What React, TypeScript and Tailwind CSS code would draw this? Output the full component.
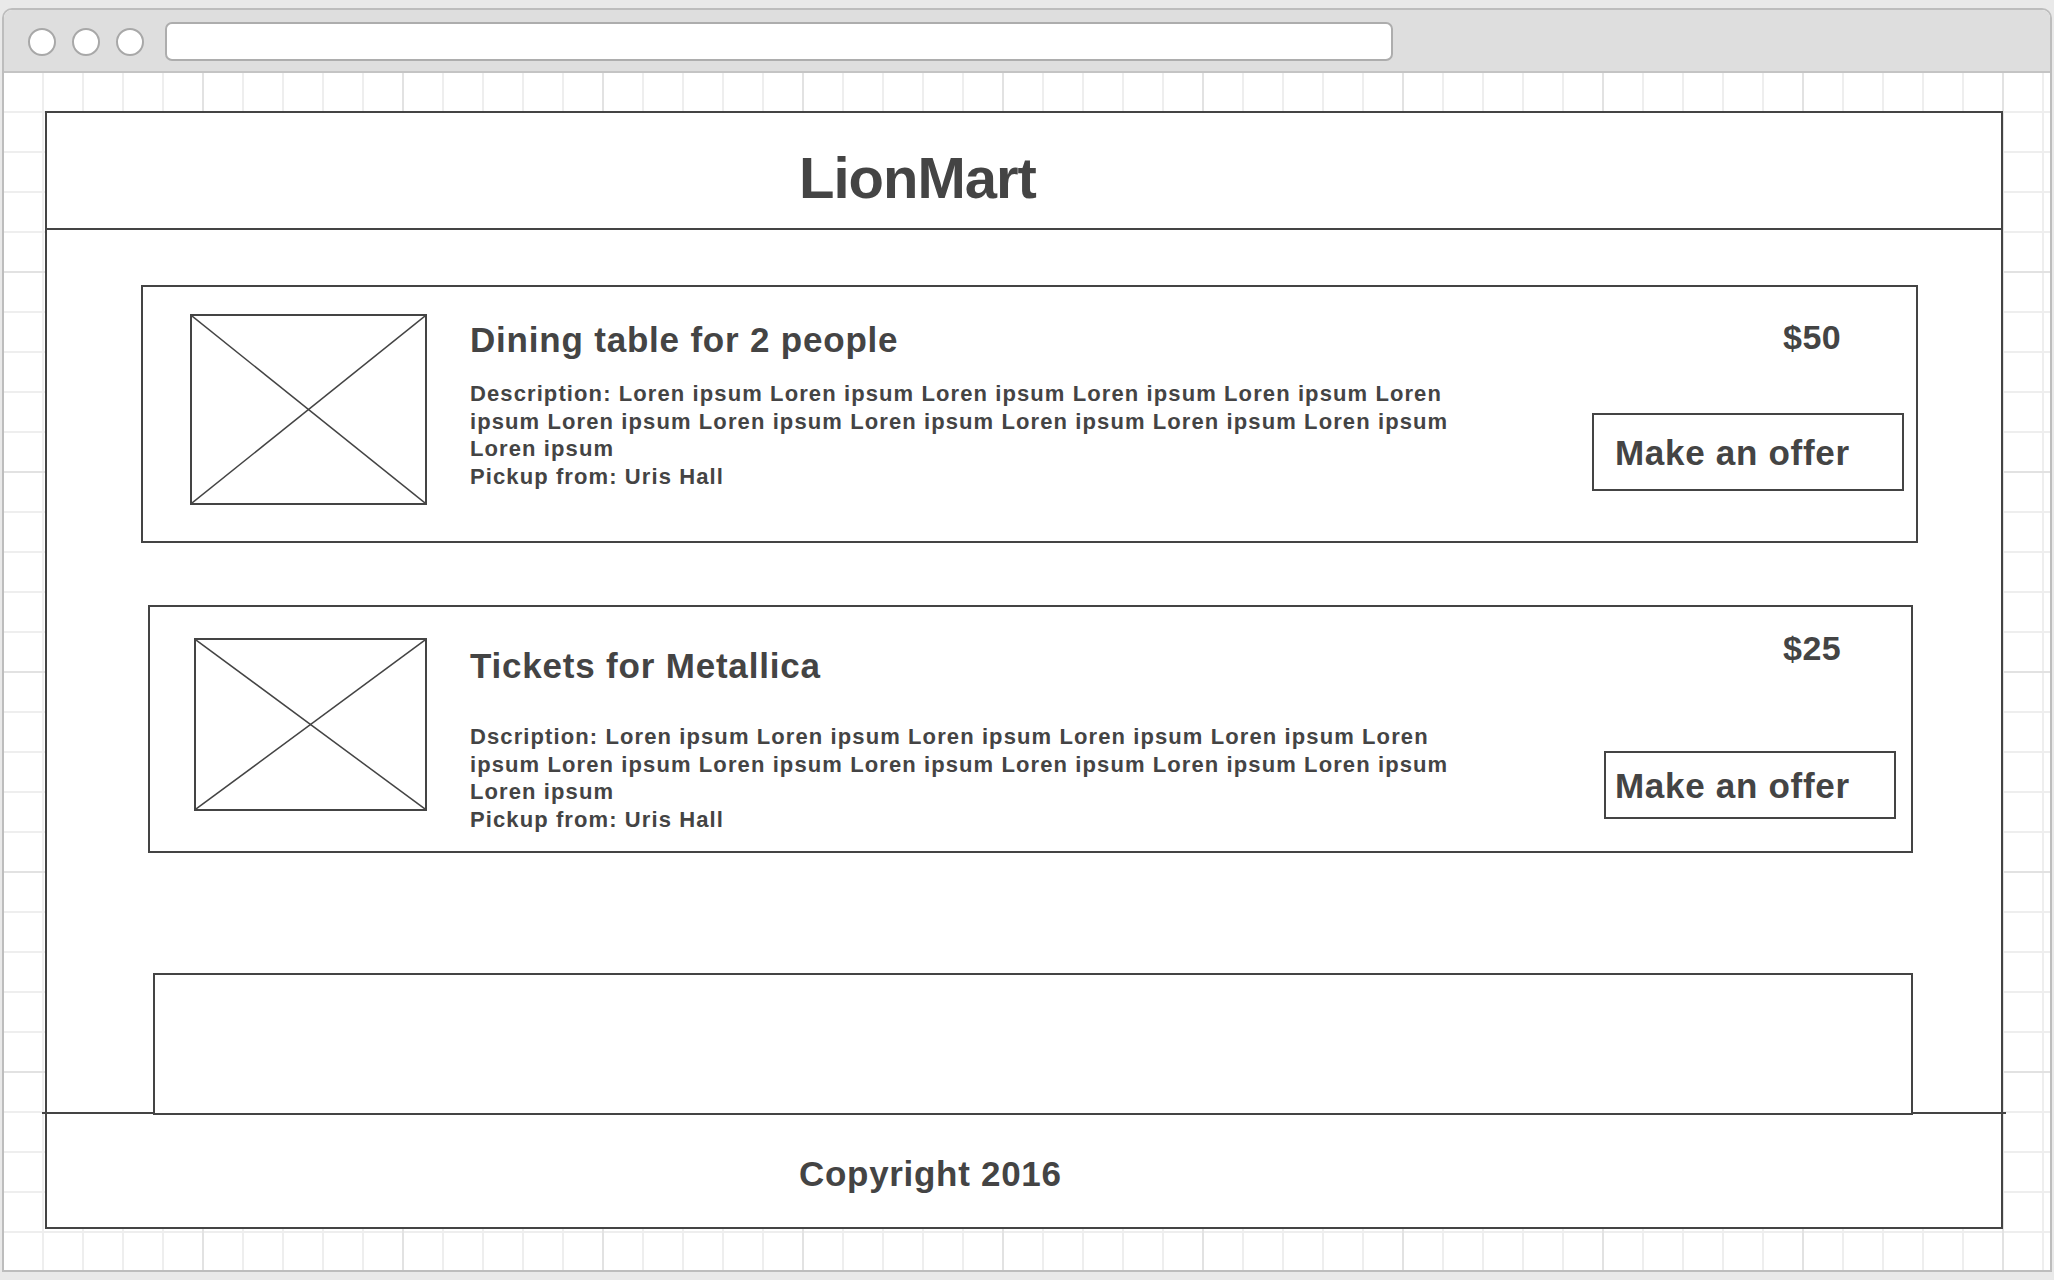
const font = "font-['Liberation_Sans',Arial,Helvetica,sans-serif]";

type Listing = {
  title: string;
  label: string;
  price: string;
  card: string;
  image: string;
  text: string;
  desc: string;
  side: string;
  priceTag: string;
  button: string;
};

const listings: Listing[] = [
  {
    title: "Dining table for 2 people",
    label: "Description",
    price: "$50",
    card: "mt-[55px] ml-[94px] w-[1777px] h-[258px]",
    image: "ml-[47px] mt-[27px] w-[237px] h-[191px]",
    text: "ml-[43px] mt-[35px]",
    desc: "mt-[23px]",
    side: "w-[312px] mr-[12px]",
    priceTag: "mt-[33px] ml-[191px]",
    button: "mt-[59px] h-[78px] w-[312px] pl-[21px]",
  },
  {
    title: "Tickets for Metallica",
    label: "Dscription",
    price: "$25",
    card: "mt-[62px] ml-[101px] w-[1765px] h-[248px]",
    image: "ml-[44px] mt-[31px] w-[233px] h-[173px]",
    text: "ml-[43px] mt-[41px]",
    desc: "mt-[40px]",
    side: "w-[292px] mr-[15px]",
    priceTag: "mt-[24px] ml-[179px]",
    button: "mt-[86px] h-[68px] w-[292px] pl-[9px]",
  },
];

function Placeholder({ className }: { className: string }) {
  return (
    <div className={`shrink-0 border-2 border-[#444] ${className}`}>
      <svg className="block h-full w-full" viewBox="0 0 100 100" preserveAspectRatio="none">
        <line x1="0" y1="0" x2="100" y2="100" stroke="#444" strokeWidth="1.5" vectorEffect="non-scaling-stroke" />
        <line x1="100" y1="0" x2="0" y2="100" stroke="#444" strokeWidth="1.5" vectorEffect="non-scaling-stroke" />
      </svg>
    </div>
  );
}

function ListingCard({ item }: { item: Listing }) {
  const lorem = "Loren ipsum ".repeat(13).trim();
  return (
    <div className={`flex shrink-0 border-2 border-[#444] ${item.card}`}>
      <Placeholder className={item.image} />
      <div className={`min-w-0 flex-1 ${item.text}`}>
        <h2 className="text-[35px] leading-none font-bold tracking-[0.8px]">{item.title}</h2>
        <div className={`w-[1030px] text-[22px] leading-[27.5px] font-bold tracking-[1.1px] ${item.desc}`}>
          <p>
            {item.label}: {lorem}
          </p>
          <p>Pickup from: Uris Hall</p>
        </div>
      </div>
      <div className={`flex shrink-0 flex-col ${item.side}`}>
        <div className={`text-[34px] leading-none font-bold tracking-[0.5px] ${item.priceTag}`}>{item.price}</div>
        <button
          className={`flex items-center border-2 border-[#444] bg-white text-[35px] leading-none font-bold tracking-[0.7px] text-[#444] ${item.button}`}
        >
          Make an offer
        </button>
      </div>
    </div>
  );
}

export default function App() {
  return (
    <div className={`h-[1280px] w-[2054px] bg-[#e9e9e9] px-[2px] pt-[8px] ${font}`}>
      <div className="flex h-[1264px] w-[2050px] flex-col overflow-hidden rounded-t-[10px] border-2 border-[#bdbdbd] bg-white">
        {/* browser chrome */}
        <div className="flex h-[63px] shrink-0 items-start border-b-2 border-[#c4c4c4] bg-[#dedede] pl-[24px]">
          <div className="mt-[18px] flex gap-[16px]">
            <span className="h-[28px] w-[28px] rounded-full border-2 border-[#a8a8a8] bg-white" />
            <span className="h-[28px] w-[28px] rounded-full border-2 border-[#a8a8a8] bg-white" />
            <span className="h-[28px] w-[28px] rounded-full border-2 border-[#a8a8a8] bg-white" />
          </div>
          <div className="mt-[12px] ml-[21px] h-[39px] w-[1228px] rounded-[7px] border-2 border-[#adadad] bg-white" />
        </div>

        {/* grid canvas */}
        <div className="flex-1 bg-white bg-[linear-gradient(to_right,transparent_198px,#e2e2e2_198px),linear-gradient(to_bottom,transparent_198px,#e2e2e2_198px),linear-gradient(to_right,transparent_38px,#eeeeee_38px),linear-gradient(to_bottom,transparent_38px,#eeeeee_38px)] bg-[size:200px_200px,200px_200px,40px_40px,40px_40px]">
          <div className="mt-[38px] ml-[41px] flex h-[1118px] w-[1958px] flex-col border-2 border-[#444] bg-white text-[#444]">
            <header className="h-[117px] shrink-0 border-b-2 border-[#444] pt-[36px] pl-[752px]">
              <h1 className="text-[58px] leading-none font-bold tracking-[-1px]">LionMart</h1>
            </header>

            {listings.map((item) => (
              <ListingCard key={item.title} item={item} />
            ))}

            <div className="relative z-10 -mb-[3px] mt-[120px] ml-[106px] h-[142px] w-[1760px] shrink-0 border-2 border-[#444] bg-white" />
            <div className="-mx-[5px] h-[2px] shrink-0 bg-[#444]" />

            <footer className="flex-1 pt-[42px] pl-[752px]">
              <p className="text-[35px] leading-none font-bold tracking-[0.7px]">Copyright 2016</p>
            </footer>
          </div>
        </div>
      </div>
    </div>
  );
}
